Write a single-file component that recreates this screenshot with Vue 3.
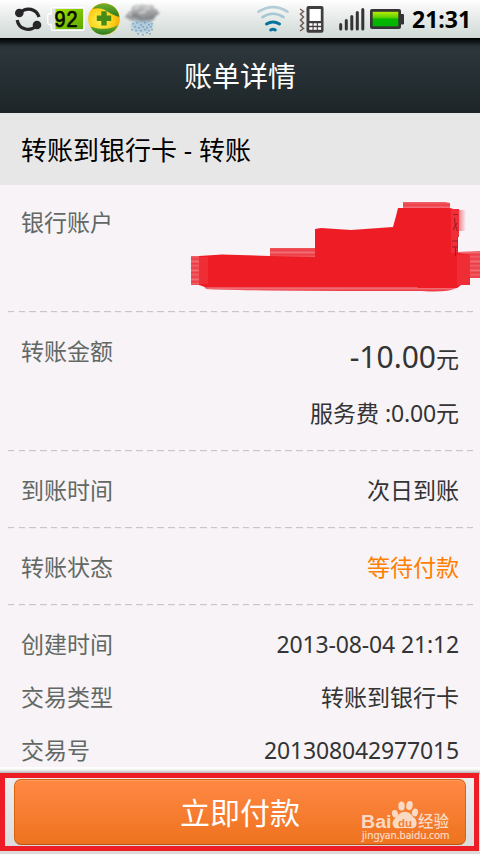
<script setup>
const details = [
  { label: '创建时间', value: '2013-08-04 21:12', numeric: true },
  { label: '交易类型', value: '转账到银行卡' },
  { label: '交易号', value: '201308042977015', numeric: true },
]
const rain = [
  [133, 23], [137, 22], [141, 24], [145, 22], [149, 24], [152, 23], [135, 26], [139, 27], [143, 26], [147, 27], [151, 26],
  [132, 29], [136, 30], [141, 30], [145, 29], [149, 30], [152, 29], [138, 33], [143, 34], [147, 32], [150, 33],
]
</script>

<template>
  <div class="screen">
    <div class="status">
      <svg class="icons" width="165" height="38" viewBox="0 0 165 38">
        <defs>
          <linearGradient id="lcd" x1="0" y1="0" x2="1" y2="1">
            <stop offset="0" stop-color="#a4e000" /><stop offset="1" stop-color="#5da800" />
          </linearGradient>
          <radialGradient id="ball" cx=".4" cy=".55" r=".6">
            <stop offset="0" stop-color="#fff45a" /><stop offset=".6" stop-color="#ffd21c" /><stop offset="1" stop-color="#f4ad00" />
          </radialGradient>
          <linearGradient id="leaf" x1="0" y1="0" x2="0" y2="1">
            <stop offset="0" stop-color="#72b02c" /><stop offset="1" stop-color="#2a7a22" />
          </linearGradient>
          <linearGradient id="cloud" x1="0" y1="0" x2="0" y2="1">
            <stop offset="0" stop-color="#cfd0d1" /><stop offset=".55" stop-color="#939597" /><stop offset="1" stop-color="#a9adaf" />
          </linearGradient>
          <filter id="soft" x="-10%" y="-10%" width="120%" height="120%"><feGaussianBlur stdDeviation=".9" /></filter>
        </defs>
        <g fill="none" stroke="#272527" stroke-width="3.2">
          <path d="M20.500 12.500A11 11 0 0 1 39 17" />
          <path d="M17.200 20A11 11 0 0 0 36 26" />
        </g>
        <circle cx="19.300" cy="13" r="4.300" fill="#272527" />
        <circle cx="37" cy="25" r="4.300" fill="#272527" />
        <path d="M53 7.700H82.500Q84.200 7.700 84.200 9.400V28.600Q84.200 30.300 82.500 30.300H53Q51.300 30.300 51.300 28.600V24.500H49.200Q47.800 24.500 47.800 23V15.500Q47.800 14 49.200 14H51.300V9.400Q51.300 7.700 53 7.700Z" fill="#dfe4e1" stroke="#fff" stroke-width="1.300" />
        <rect x="55.500" y="9" width="27.500" height="20" fill="url(#lcd)" />
        <text class="lcd" x="54" y="27.400" textLength="24" lengthAdjust="spacingAndGlyphs">92</text>
        <circle cx="104" cy="19" r="15.800" fill="url(#ball)" />
        <path d="M92.500 9C98 2 108 2 114 7Q118.500 11 119.300 17C113 15 110 13 106 10.500Q100 7 92.500 9Z" fill="url(#leaf)" />
        <path d="M90.500 26.500C96 28 99 29 104 28.800Q112 28.500 118 25C114 36 96 39 90.500 26.500Z" fill="url(#leaf)" />
        <path d="M104 11.200V25.500M96.800 18.300H111.200" fill="none" stroke="#478b16" stroke-width="5.400" />
        <g filter="url(#soft)">
          <path d="M124 17C129 15 126 12 132 11C130 6 135 4 139 5C143 3 147 6 150 5C153 4 155 7 154 9C158 8 157 12 160 13L155 17C155 21 150 23 145 22C139 24 136 20 133 21C129 21 129 18 124 17Z" fill="url(#cloud)" />
          <path d="M131 16C136 14 138 18 142 19C145 18 150 19 154 16" fill="none" stroke="#6b6d70" stroke-width="2.600" opacity=".6" />
          <path d="M134 9L139 7M144 9L150 8M139 13L146 12M129 15L132 14" stroke="#e2e4e5" stroke-width="2" opacity=".7" />
          <ellipse cx="142" cy="26" rx="11" ry="6.500" fill="#82afcf" opacity=".45" />
        </g>
        <path v-for="(d, i) in rain" :key="i" :d="`M${d[0]} ${d[1]}v1.500`" stroke="#4f93c8" stroke-width="1.200" />
      </svg>
      <div class="status-right">
        <svg width="152" height="38" viewBox="254 0 152 38">
          <defs>
            <linearGradient id="charge" x1="0" y1="0" x2="0" y2="1">
              <stop offset="0" stop-color="#b6ed00" /><stop offset=".4" stop-color="#5ad000" /><stop offset=".5" stop-color="#08b800" /><stop offset="1" stop-color="#00b500" />
            </linearGradient>
          </defs>
          <g fill="none" stroke-linecap="round" stroke-width="2.600">
            <path d="M258.500 11.700Q273 2.500 287.500 11.700" stroke="#b2cdd6" />
            <path d="M262.500 17.200Q273 10.200 283.500 17.200" stroke="#a6c8d4" />
            <path d="M266.500 24Q273 19.800 279.500 24" stroke="#04749b" stroke-width="3" />
            <path d="M270.700 30Q273 28.500 275.300 30" stroke="#04749b" stroke-width="3" />
          </g>
          <path d="M300 9L303.500 11.500L300.500 14L303.500 17L300.500 20L303.500 23L300.500 26L303.500 28.500L300 31" fill="none" stroke="#705b56" stroke-width="1.500" />
          <rect x="306.500" y="6" width="17" height="26.700" rx="2" fill="#403d3f" />
          <rect x="309.500" y="9" width="11.300" height="12" fill="#fff" />
          <path d="M309.300 24.500h3.200M313.600 24.500h3.200M317.900 24.500h3.200M309.300 28.500h3.200M313.600 28.500h3.200M317.900 28.500h3.200" stroke="#fff" stroke-width="2.500" />
          <path d="M340.700 24.500V29M346.300 20.500V29M351.800 16.500V29M357.300 12.500V29M362.800 9.500V29" stroke="#353335" stroke-width="3" stroke-linecap="round" />
          <rect x="400" y="14" width="4" height="10.500" rx="1" fill="#363336" />
          <rect x="370" y="9" width="31" height="20" rx="2" fill="#363336" />
          <rect x="372.700" y="11.800" width="25.600" height="14.500" fill="url(#charge)" />
        </svg>
        <span class="clock">21:31</span>
      </div>
    </div>

    <header class="title">账单详情</header>
    <h2 class="subject">转账到银行卡 - 转账</h2>

    <main class="body">
      <section class="section account">
        <div class="row"><span class="label">银行账户</span></div>
        <svg class="redaction" width="300" height="100" viewBox="180 195 300 100">
          <defs>
            <linearGradient id="streak" gradientUnits="userSpaceOnUse" x1="0" y1="0" x2="0" y2="9" spreadMethod="repeat">
              <stop offset="0" stop-color="#f2777f" /><stop offset=".3" stop-color="#ed3942" /><stop offset=".5" stop-color="#ef5d65" /><stop offset=".8" stop-color="#ee3c46" /><stop offset="1" stop-color="#f0636b" />
            </linearGradient>
            <linearGradient id="fade"><stop offset="0" stop-color="#f04650" /><stop offset="1" stop-color="#f04650" stop-opacity="0" /></linearGradient>
          </defs>
          <path d="M191 256H200V285H191ZM270 248H317V262H270ZM403 202H445L450 203V214H403ZM457 252L480 251V278H457ZM202 284L206 289Q240 291 417 291L422 291Q446 293 457 288L462 283Z" fill="url(#streak)" />
          <rect x="455" y="210" width="11" height="21" fill="url(#fade)" />
          <path d="M199 256L222 254.500L270 256L315 257V229L321 228L351 230L393 227L396 216L398 208H450L457 210L459 214V237H458V253L470 255V285H461L457 288H418L417 287H205L199 285Z" fill="#ee1c25" />
          <path d="M457 255h13v30h-13zM199 257h9v27h-9z" fill="#ee343c" opacity=".7" />
          <path d="M451 209H459V237H457V253H451Z" fill="#ee2f39" />
          <path d="M453 214.500h5M454.500 218q0 7 3 13M457 223l-4 7M452 241h6M452 247h6M455.500 247v9" stroke="#a21c28" stroke-width="1.100" fill="none" />
        </svg>
      </section>
      <section class="section amount">
        <div class="row"><span class="label">转账金额</span></div>
        <div class="sum"><span class="big">-10.00</span>元</div>
        <div class="fee">服务费 <span class="num">:0.00</span>元</div>
      </section>
      <section class="section single">
        <div class="row"><span class="label">到账时间</span><span>次日到账</span></div>
      </section>
      <section class="section single">
        <div class="row"><span class="label">转账状态</span><span class="pending">等待付款</span></div>
      </section>
      <section class="section details">
        <div v-for="item in details" :key="item.label" class="row">
          <span class="label">{{ item.label }}</span><span :class="{ num: item.numeric }">{{ item.value }}</span>
        </div>
      </section>
    </main>

    <footer class="footer">
      <div class="frame">
        <button class="pay">立即付款</button>
        <div class="watermark">
          <svg width="94" height="46" viewBox="360 797 94 46" fill="#fbdac3">
            <text class="brand" x="362" y="827.500" textLength="30.500" lengthAdjust="spacingAndGlyphs">Bai</text>
            <ellipse cx="396" cy="813.700" rx="3" ry="3.800" transform="rotate(-14 396 813.700)" />
            <ellipse cx="402.500" cy="806" rx="3.200" ry="4.600" />
            <ellipse cx="410.500" cy="805.500" rx="3.200" ry="4.600" transform="rotate(10 410.500 805.500)" />
            <ellipse cx="416" cy="812.500" rx="3" ry="3.900" transform="rotate(14 416 812.500)" />
            <path d="M405.700 811.700C400.500 811.700 399 816 396 818.500C391.500 822.500 393.500 829 399 828.300C404 827.800 408 827.800 412 828.300C418 829 419 822.500 416 818.500C412.500 815.500 411 811.700 405.700 811.700Z" />
            <text class="du" x="399" y="826.500" textLength="14" lengthAdjust="spacingAndGlyphs">du</text>
            <text class="jy" x="419" y="827" textLength="31">经验</text>
            <text class="site" x="363" y="839" textLength="87.500" lengthAdjust="spacingAndGlyphs">jingyan.baidu.com</text>
          </svg>
        </div>
      </div>
    </footer>
  </div>
</template>

<style>
body { margin: 0; background: #f7f3f7; }
</style>
<style scoped>
.screen {
  width: 480px; height: 854px; overflow: hidden; display: flex; flex-direction: column;
  background: #f7f3f7; color: #333433;
  font-family: "Noto Sans", "Noto Sans CJK SC", sans-serif; font-size: 23px; line-height: 30px;
}
.status {
  height: 38px; flex: none; display: flex; justify-content: space-between;
  background: linear-gradient(#fff 0, #eff1f0 30%, #dce3e0 70%, #d1d9d5 100%);
}
.status svg { display: block; }
.lcd { font: 24px "Liberation Mono", monospace; fill: #060b02; stroke: #060b02; stroke-width: .7px; }
.status-right { display: flex; align-items: center; gap: 6px; padding-right: 9px; }
.clock { font: bold 23px/38px "Open Sans", sans-serif; color: #000; width: 59px; }
.title {
  height: 75px; flex: none; color: #fff; font-size: 28px; line-height: 77px; text-align: center;
  background: linear-gradient(#000 0, #10171a 4px, #273136 8px, #2c363b 12px, #1d2528 100%);
}
.subject {
  height: 72px; flex: none; margin: 0; padding-left: 21px; box-sizing: border-box;
  background: #e7e7e7; color: #000; font-size: 26px; font-weight: 400; line-height: 74px;
}
.body { height: 582px; flex: none; overflow: hidden; }
.section { position: relative; box-sizing: border-box; padding: 0 21px; }
.section:not(.details)::after {
  content: ""; position: absolute; left: 8px; right: 7px; bottom: 0; height: 2px;
  background:
    repeating-linear-gradient(90deg, #c6c7c6 0 6.500px, transparent 6.500px 10.667px) 0 0 / 100% 1px no-repeat,
    repeating-linear-gradient(90deg, #eeecec 0 6.500px, transparent 6.500px 10.667px) 0 1px / 100% 1px no-repeat;
}
.row { display: flex; justify-content: space-between; }
.label { color: #626864; }
.account { height: 128px; padding-top: 22px; }
.redaction { position: absolute; right: 0; top: 10px; }
.amount { height: 139px; padding-top: 23px; }
.sum, .fee { text-align: right; }
.sum { margin-top: -27px; line-height: 36px; }
.big { font-size: 30px; }
.fee { margin-top: 21px; }
.num { letter-spacing: -0.15px; }
.single { height: 77px; padding-top: 23px; }
.pending { color: #ff7f00; }
.details { padding-top: 23px; display: flex; flex-direction: column; gap: 23px; }
.footer {
  height: 87px; flex: none; padding: 6px 1px 3px 0; box-sizing: border-box;
  background: linear-gradient(#fff 0, #fafafa 2px, #e0e0e0 4px, #b0b0b0 6px, #e9e9e9 8px, #dedcd8 100%);
}
.frame {
  position: relative; height: 78px; box-sizing: border-box; border: 5px solid #ee1c25;
  padding: 1px 8px 1px 9px; background: linear-gradient(#ededed, #dcdcdc);
}
.pay {
  display: block; width: 100%; height: 66px; padding: 2px 0 0; border: 1px solid #d66310;
  border-bottom-color: #b65316; border-radius: 7px; color: #fff;
  background: linear-gradient(#ff8844, #ee731f); box-shadow: inset 0 1px #ff9d62;
  font: 30px/62px "Noto Sans", "Noto Sans CJK SC", sans-serif;
}
.watermark { position: absolute; right: 21px; top: 19px; }
.watermark svg { display: block; }
.brand { font: bold 18.5px "Liberation Sans", sans-serif; }
.du { font: bold 11px "Liberation Sans", sans-serif; fill: #f47b2f; }
.jy { font: 500 15.5px "Noto Sans CJK SC", sans-serif; }
.site { font: 10.5px "Noto Sans", sans-serif; stroke: #fbdac3; stroke-width: .2px; }
</style>
